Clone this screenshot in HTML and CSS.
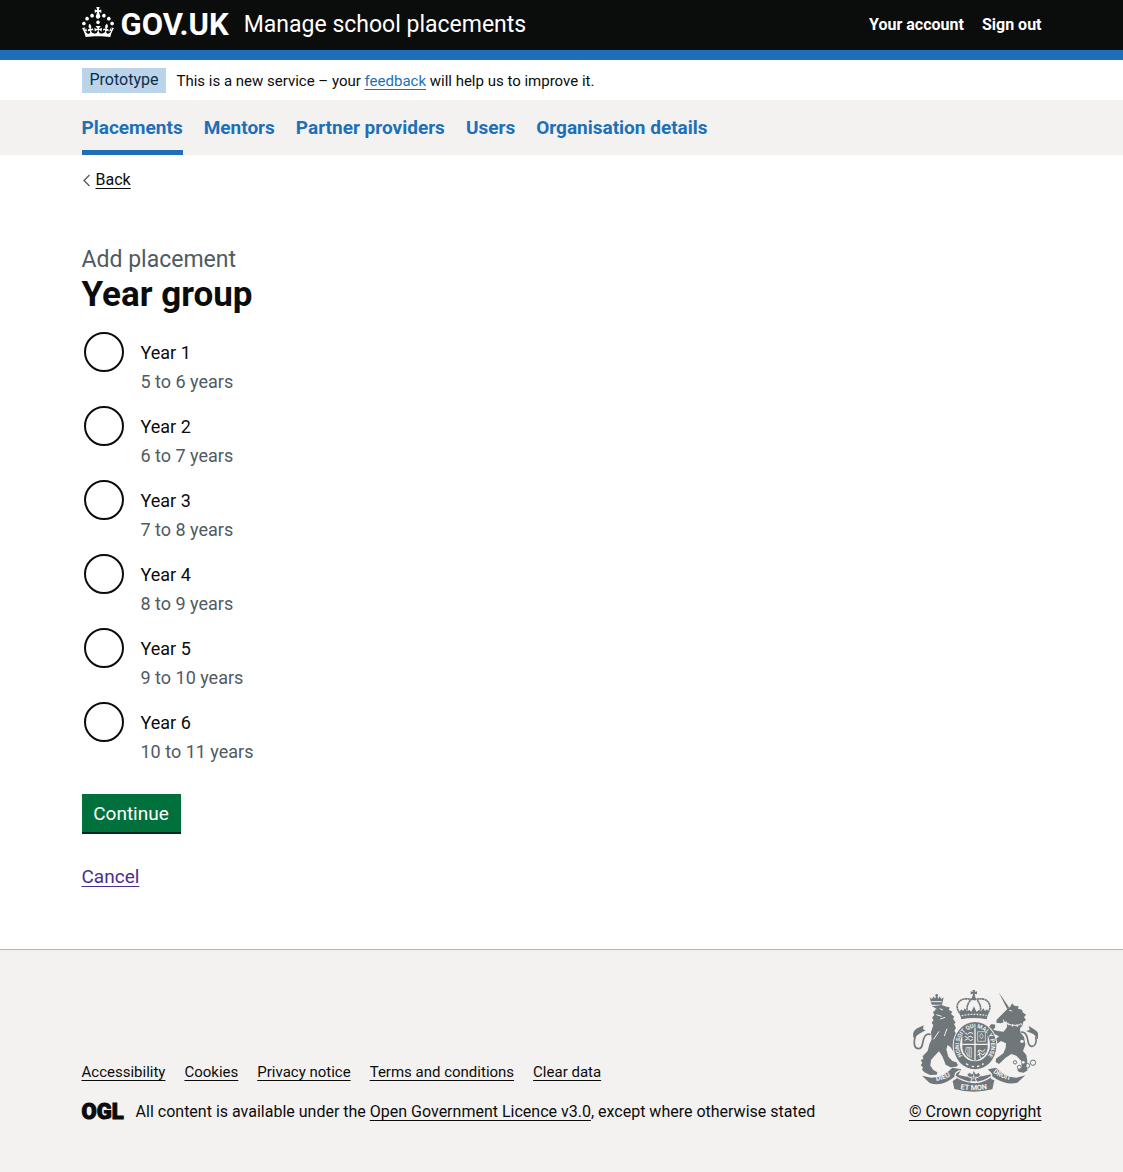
FILE: index.html
```html
<!DOCTYPE html>
<html lang="en">
<head>
<meta charset="utf-8">
<meta name="viewport" content="width=device-width, initial-scale=1">
<title>Year group - Manage school placements</title>
<link rel="stylesheet" href="styles.css">
</head>
<body>
<header class="header">
  <div class="container header-row">
    <a class="header-logo" href="#">
      <svg class="header-crown" viewBox="0 0 32 30" width="32" height="30" aria-hidden="true"><path fill="currentColor" d="M22.6 10.4c-1 .4-2-.1-2.4-1-.4-.9.1-2 1-2.4.9-.4 2 .1 2.4 1s-.1 2-1 2.4m-5.9 6.7c-.9.4-2-.1-2.4-1-.4-.9.1-2 1-2.4.9-.4 2 .1 2.4 1s-.1 2-1 2.4m10.8-3.7c-1 .4-2-.1-2.4-1-.4-.9.1-2 1-2.4.9-.4 2 .1 2.4 1s0 2-1 2.4m3.3 4.8c-1 .4-2-.1-2.4-1-.4-.9.1-2 1-2.4.9-.4 2 .1 2.4 1s-.1 2-1 2.4M17 4.7l2.3 1.2V2.5l-2.3.7-.2-.2.9-3h-3.4l.9 3-.2.2c-.1.1-2.3-.7-2.3-.7v3.4L15 4.7c.1.1.1.2.2.2l-1.3 4c-.1.2-.1.4-.1.6 0 1.1.8 2 1.9 2.2h.7c1-.2 1.9-1.1 1.9-2.1 0-.2 0-.4-.1-.6l-1.3-4c-.1-.2 0-.2.1-.3m-7.6 5.7c.9.4 2-.1 2.4-1 .4-.9-.1-2-1-2.4-.9-.4-2 .1-2.4 1s0 2 1 2.4m-5 3c.9.4 2-.1 2.4-1 .4-.9-.1-2-1-2.4-.9-.4-2 .1-2.4 1s.1 2 1 2.4m-3.2 4.8c.9.4 2-.1 2.4-1 .4-.9-.1-2-1-2.4-.9-.4-2 .1-2.4 1s0 2 1 2.4m14.8 11c4.4 0 8.6.3 12.3.8 1.1-4.5 2.4-7 3.7-8.8l-2.5-.9c.2 1.3.3 1.9 0 2.7-.4-.4-.8-1.1-1.1-2.3l-1.2 4c.7-.5 1.3-.8 2-.9-1.1 2.5-2.6 3.1-3.5 3-1.1-.2-1.7-1.2-1.5-2.1.3-1.2 1.5-1.5 2.1-.1 1.1-2.3-.8-3-2-2.3 1.9-1.9 2.1-3.5.6-5.6-2.1 1.6-2.1 3.2-1.2 5.5-1.2-1.4-3.2-.6-2.5 1.6.9-1.4 2.1-.5 1.9.8-.2 1.1-1.7 2.1-3.5 1.9-2.7-.2-2.9-2.1-2.9-3.6.7-.1 1.9.5 2.9 1.9l.4-4.3c-1.1 1.1-2.1 1.4-3.2 1.4.4-1.2 2.1-3 2.1-3h-5.4s1.7 1.9 2.1 3c-1.1 0-2.1-.2-3.2-1.4l.4 4.3c1-1.4 2.2-2 2.9-1.9-.1 1.5-.2 3.4-2.9 3.6-1.9.2-3.4-.8-3.5-1.9-.2-1.3 1-2.2 1.9-.8.7-2.3-1.2-3-2.5-1.6.9-2.2.9-3.9-1.2-5.5-1.5 2-1.3 3.7.6 5.6-1.2-.7-3.1 0-2 2.3.6-1.4 1.8-1.1 2.1.1.2.9-.3 1.9-1.5 2.1-.9.2-2.4-.5-3.5-3 .6 0 1.2.3 2 .9l-1.2-4c-.3 1.1-.7 1.9-1.1 2.3-.3-.8-.2-1.4 0-2.7l-2.9.9C1.3 23 2.6 25.5 3.7 30c3.7-.5 7.9-.8 12.3-.8"/></svg>
      <span>GOV.UK</span>
    </a>
    <a class="header-service" href="#">Manage school placements</a>
    <nav class="header-account" aria-label="Account">
      <a href="#">Your account</a>
      <a href="#">Sign out</a>
    </nav>
  </div>
</header>

<div class="page">
<div class="container phase">
  <strong class="tag">Prototype</strong>
  <span class="phase-text">This is a new service – your <a class="link" href="#">feedback</a> will help us to improve it.</span>
</div>

<nav class="nav" aria-label="Primary">
  <ul class="container nav-list">
    <li><a class="nav-link nav-link-current" href="#" aria-current="page">Placements</a></li>
    <li><a class="nav-link" href="#">Mentors</a></li>
    <li><a class="nav-link" href="#">Partner providers</a></li>
    <li><a class="nav-link" href="#">Users</a></li>
    <li><a class="nav-link" href="#">Organisation details</a></li>
  </ul>
</nav>

<div class="container body">
  <a class="back" href="#">
    <svg viewBox="0 0 14 20" width="14" height="20" aria-hidden="true"><path d="M7.500 5 2 10.500 7.500 16" fill="none" stroke="#505a5f" stroke-width="1.300"/></svg><span>Back</span>
  </a>
  <main class="main">
    <form>
      <fieldset class="fieldset">
        <legend class="legend">
          <span class="caption">Add placement</span>
          <h1 class="heading">Year group</h1>
        </legend>
        <div class="radios">
          <div class="radio-item">
            <input class="radio" type="radio" name="year" id="year-1" aria-describedby="hint-1">
            <div><label class="radio-label" for="year-1">Year 1</label><div class="hint" id="hint-1">5 to 6 years</div></div>
          </div>
          <div class="radio-item">
            <input class="radio" type="radio" name="year" id="year-2" aria-describedby="hint-2">
            <div><label class="radio-label" for="year-2">Year 2</label><div class="hint" id="hint-2">6 to 7 years</div></div>
          </div>
          <div class="radio-item">
            <input class="radio" type="radio" name="year" id="year-3" aria-describedby="hint-3">
            <div><label class="radio-label" for="year-3">Year 3</label><div class="hint" id="hint-3">7 to 8 years</div></div>
          </div>
          <div class="radio-item">
            <input class="radio" type="radio" name="year" id="year-4" aria-describedby="hint-4">
            <div><label class="radio-label" for="year-4">Year 4</label><div class="hint" id="hint-4">8 to 9 years</div></div>
          </div>
          <div class="radio-item">
            <input class="radio" type="radio" name="year" id="year-5" aria-describedby="hint-5">
            <div><label class="radio-label" for="year-5">Year 5</label><div class="hint" id="hint-5">9 to 10 years</div></div>
          </div>
          <div class="radio-item">
            <input class="radio" type="radio" name="year" id="year-6" aria-describedby="hint-6">
            <div><label class="radio-label" for="year-6">Year 6</label><div class="hint" id="hint-6">10 to 11 years</div></div>
          </div>
        </div>
      </fieldset>
      <button class="button" type="submit">Continue</button>
    </form>
    <p class="cancel"><a class="link link-visited" href="#">Cancel</a></p>
  </main>
</div>
</div>

<footer class="footer">
  <div class="container footer-row">
    <div class="footer-main">
      <ul class="footer-links">
        <li><a class="link link-text" href="#">Accessibility</a></li>
        <li><a class="link link-text" href="#">Cookies</a></li>
        <li><a class="link link-text" href="#">Privacy notice</a></li>
        <li><a class="link link-text" href="#">Terms and conditions</a></li>
        <li><a class="link link-text" href="#">Clear data</a></li>
      </ul>
      <div class="licence">
        <span class="ogl">OGL</span>
        <span>All content is available under the <a class="link link-text" href="#">Open Government Licence v3.0</a>, except where otherwise stated</span>
      </div>
    </div>
    <div class="copyright">
      <svg class="arms" viewBox="39 30 378 306" width="126" height="102" aria-hidden="true">
        <defs>
          <path id="garter" d="M190 228A48 53 0 1 1 267 228"/>
          <path id="scroll-left" d="M112 303Q142 299 166 280"/>
          <path id="scroll-mid" d="M184 327Q224 335 272 326"/>
          <path id="scroll-right" d="M282 277Q308 298 346 303"/>
        </defs>
        <!-- lion -->
        <g fill="#6f777b">
          <path d="M92 52l7 5 5-8 4 7 5-12 5 12 4-7 5 8 7-5-5 22H98z"/>
          <circle cx="113" cy="46" r="4"/>
          <path d="M98 79l30-4 14 5 10 2-2 8 10 5-4 7 10 8-4 6 8 12-5 4 6 12-5 8 10 18-2 14 12 22-6 3 3 9-7-1-2 9-8-6-11-18-9-7-4 13 6 22 12 13 12 4 5 8-5 5-18 2-14-8-10-25-10-15-13 13-11 13-2 17 9 13 12 7-2 7-20 1-17-8-7-8 3-7-7-6 5-7-5-9 8-3-2-8 15-16 5-20 7-15-2-22 7-20-5-8 6-8-5-7 7-8-4-9 7-5-1-8z"/>
          <path d="M44 174c-5-15 1-25 14-31l16-7-2 12 8 3-15 8c-10 5-13 10-21 15z"/>
        </g>
        <path d="M50 166c-8 24-4 40 9 40 15 0 9-22 18-36 4-7 12-10 18-6" fill="none" stroke="#6f777b" stroke-width="5"/>
        <path d="M97 65h31M100 84l12 3m10-1 10 4m-20 14 16 5m-4 8 14-5m-18 42-16 24m40-32-8 22" fill="none" stroke="#f3f2f1" stroke-width="3"/>
        <!-- unicorn -->
        <g fill="#6f777b">
          <path d="M299 37l31 45-5 6z"/>
          <path d="M325 87l10-8 4-9 7 7 13 2-2 7 12 3 2 8 10 7-6 8 6 8-8 5-3 12-7 8 1 12 11 14 4 23-7 19 10 12 3 18-3 16 4 12-12 7-14-2-6-7 14-5-1-21-15-16-15-5-18 12-19 18-10-6 1-10 22-16 7-16 1-14-15-7-14 10-9 11-8-6 7-14 18-15-19-9-12-10 2-11 7-7 11 2-1 9-6 6 15 4 17 2 10-13-1-18-18 6-13-2 1-9z"/>
          <path d="M416 178c6-15 0-24-12-31l-15-9 3 12-11 3 17 7c9 4 12 10 18 18z"/>
        </g>
        <path d="M410 170c5 18-3 31-13 29-15-3-6-25-18-38-4-4-9-6-13-4" fill="none" stroke="#6f777b" stroke-width="5"/>
        <path d="M316 126q22 15 48 8M313 119l3 9m11 0 1 8m13-4-1 8m14-7 1 8m10-12 3 7M331 91l8 2" fill="none" stroke="#f3f2f1" stroke-width="3"/>
        <g fill="none" stroke="#6f777b" stroke-width="3"><circle cx="348" cy="247" r="5"/><circle cx="361" cy="262" r="6"/><circle cx="385" cy="257" r="7"/><circle cx="402" cy="248" r="8"/></g>
        <circle cx="369" cy="184" r="5" fill="#f3f2f1"/><circle cx="373" cy="247" r="4" fill="#f3f2f1"/>
        <!-- royal crown -->
        <g fill="#6f777b">
          <path d="M220 29h9l-2 7 7-2v9l-7-2 2 9h-9l2-9-7 2v-9l7 2z"/>
          <circle cx="224" cy="55" r="6"/>
          <path d="M181 96l6-8 5 5 5-8 7 9 7-4 6 5 8-16 7 16 8-5 6 4 7-9 5 8 6-5 5 8-6 22q-40-8-76 0z"/>
        </g>
        <path d="M187 105q-19-21-9-37 11-17 43-9m4 0q34-8 44 9 10 17-7 37M214 61q-13 17-9 32m30-32q13 17 9 32" fill="none" stroke="#6f777b" stroke-width="5" stroke-dasharray="7 1"/>
        <path d="M188 107q37-8 75 0" fill="none" stroke="#f3f2f1" stroke-width="4" stroke-dasharray="5 4"/>
        <!-- shield and garter -->
        <ellipse cx="228" cy="197" rx="67" ry="74" fill="#f3f2f1"/>
        <ellipse cx="228" cy="197" rx="64" ry="71" fill="#6f777b"/>
        <ellipse cx="228" cy="194" rx="45" ry="50" fill="#f3f2f1"/>
        <path d="M190 151q38-15 76 0v54q-2 26-38 38-36-12-38-38z" fill="#6f777b"/>
        <path d="M228 145v97M190 193h76" stroke="#f3f2f1" stroke-width="4"/>
        <path d="M197 158l8 5 8-6 10 4m-26 8 9 4 7-5 9 5m-25 8 10-5 8 6 7-4M235 216l7-6 9 5 8-7m-24 18 9-6 8 5 6-8m-19-7 5 24" fill="none" stroke="#f3f2f1" stroke-width="3"/>
        <path d="M236 155h23v29h-23zM247 160l-5 9 6 8 5-9zM202 202q-6 12 3 24l12 7V203zM207 203v25m5-26v29" fill="none" stroke="#f3f2f1" stroke-width="2"/>
        <text class="arms-text" font-size="17"><textPath href="#garter">HONI SOIT QUI MAL Y PENSE</textPath></text>
        <path d="M201 251l7 4m10 4 7 1m9 0 7-2m8-4 5-3" stroke="#f3f2f1" stroke-width="4"/>
        <!-- motto scroll and rose -->
        <path d="M69 287l28 6q38-2 63-30l27 5-9 17q48 13 98-2l-9-15 24-5q29 29 61 30l27-7-24 22q-30 8-62-10l-15-10-3 8 11 5-6 27q-57 15-114-1l-5-24 13-8-4-8q-39 35-78 22z" fill="#6f777b"/>
        <path d="M184 271q-17 7-16 17 25 18 58 20 31-2 52-20 1-10-15-17" fill="none" stroke="#f3f2f1" stroke-width="4"/>
        <path d="M224 270l7 12 8-5 6 8-7 7-10 3 5 10h-18l5-10-11-4-5-7 7-7 8 5z" fill="#6f777b" stroke="#f3f2f1" stroke-width="3"/>
        <path d="M224 281v17m-10-7h20" stroke="#f3f2f1" stroke-width="2"/>
        <text class="arms-text" font-size="21"><textPath href="#scroll-left">DIEU</textPath></text>
        <text class="arms-text" font-size="22"><textPath href="#scroll-mid">ET MON</textPath></text>
        <text class="arms-text" font-size="20"><textPath href="#scroll-right">DROIT</textPath></text>
      </svg>
      <a class="link link-text" href="#">© Crown copyright</a>
    </div>
  </div>
</footer>
</body>
</html>
```

FILE: styles.css
```css
* {
  box-sizing: border-box;
}

body {
  margin: 0;
  background: #f3f2f1;
  color: #0b0c0c;
  font: 16px/20px Roboto, "Liberation Sans", sans-serif;
}

ul {
  margin: 0;
  padding: 0;
  list-style: none;
}

.container {
  width: calc(100% - 60px);
  max-width: 960px;
  margin: 0 auto;
}

.page {
  background: #fff;
}

.link {
  color: #1d70b8;
  text-decoration: underline;
  text-decoration-thickness: 1px;
  text-underline-offset: 3px;
}

.link-text {
  color: #0b0c0c;
}

.link-visited {
  color: #4c2c92;
}

/* Header */
.header {
  background: #0b0c0c;
  border-bottom: 10px solid #1d70b8;
}

.header a {
  color: #fff;
  text-decoration: none;
}

.header-row {
  display: flex;
  align-items: center;
  min-height: 50px;
}

.header-logo {
  display: flex;
  align-items: center;
  gap: 7px;
  margin-right: 15px;
  font-size: 31px;
  line-height: 30px;
  font-weight: 700;
}

.header-crown {
  display: block;
  margin-bottom: 6px;
}

.header-service {
  font-size: 23px;
  line-height: 30px;
}

.header-account {
  display: flex;
  gap: 18px;
  margin-left: auto;
  font-weight: 700;
}

/* Phase banner */
.phase {
  display: flex;
  align-items: center;
  gap: 10px;
  padding: 8px 0 7px;
}

.phase-text {
  font-size: 15px;
}

.tag {
  padding: 2px 8px 3px;
  background: #bbd4ea;
  color: #0c2d4a;
  font-weight: 400;
}

/* Primary navigation */
.nav {
  background: #f3f2f1;
}

.nav-list {
  display: flex;
  flex-wrap: wrap;
  gap: 0 21px;
}

.nav-link {
  display: block;
  padding: 15px 0 10px;
  border-bottom: 5px solid transparent;
  color: #1d70b8;
  font-size: 19px;
  line-height: 25px;
  font-weight: 700;
  text-decoration: none;
}

.nav-link-current {
  border-color: #1d70b8;
}

/* Page body */
.body {
  padding: 15px 0 60px;
}

.back {
  display: flex;
  width: fit-content;
  color: #0b0c0c;
  text-decoration: none;
}

.back span {
  text-decoration: underline;
  text-underline-offset: 3px;
}

.main {
  padding-top: 55px;
  font-size: 19px;
  line-height: 25px;
}

.fieldset {
  margin: 0;
  padding: 0;
  border: 0;
}

.legend {
  margin-bottom: 15px;
  padding: 0;
}

.caption {
  display: block;
  color: #505a5f;
  font-size: 23px;
  line-height: 30px;
}

.heading {
  margin: 0;
  font-size: 35px;
  line-height: 40px;
  font-weight: 700;
}

.radios {
  display: grid;
  gap: 10px;
  font-size: 18px;
}

.radio-item {
  display: flex;
  gap: 17px;
}

.radio {
  appearance: none;
  width: 40px;
  height: 40px;
  margin: 2px 0 0 2px;
  border: 2px solid #0b0c0c;
  border-radius: 50%;
  background: #fff;
}

.radio:checked {
  box-shadow: inset 0 0 0 8px #fff;
  background: #0b0c0c;
}

.radio-label {
  display: block;
  padding: 10px 0 4px;
}

.hint {
  color: #505a5f;
}

.button {
  display: block;
  min-width: 99px;
  margin: 30px 0 32px;
  padding: 7px 10px 6px;
  border: 0;
  background: #00703c;
  box-shadow: 0 2px 0 #002d18;
  color: #fff;
  font: inherit;
}

.cancel {
  margin: 0;
}

/* Footer */
.footer {
  padding: 40px 0 50px;
  border-top: 1px solid #b1b4b6;
  background: #f3f2f1;
}

.footer-row {
  display: flex;
  align-items: flex-end;
  justify-content: space-between;
  gap: 20px;
}

.footer-main {
  display: grid;
  gap: 20px;
}

.footer-links {
  display: flex;
  flex-wrap: wrap;
  gap: 10px 19px;
  font-size: 15px;
}

.licence {
  display: flex;
  align-items: center;
  gap: 12px;
}

.ogl {
  font-size: 22px;
  line-height: 20px;
  font-weight: 900;
  -webkit-text-stroke: 1px currentColor;
}

.copyright {
  display: grid;
  justify-items: center;
  gap: 10px;
}

.arms {
  display: block;
}

.arms-text {
  fill: #f3f2f1;
  font-weight: 700;
}
```
